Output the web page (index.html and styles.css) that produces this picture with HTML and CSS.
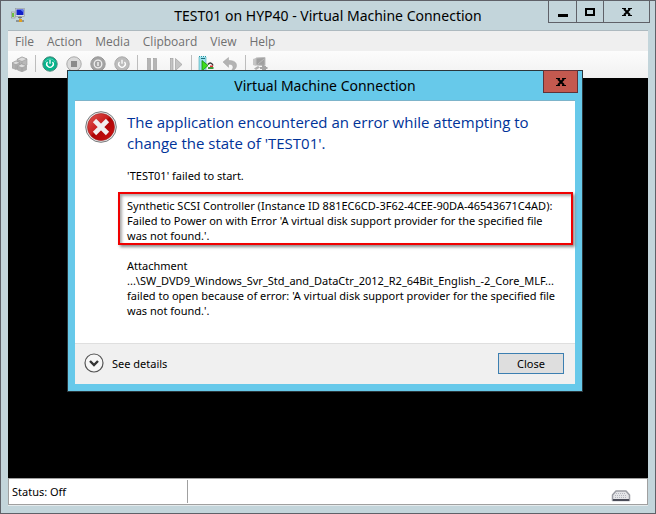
FILE: index.html
```html
<!DOCTYPE html>
<html lang="en">
<head>
    <meta charset="UTF-8">
    <meta name="viewport" content="width=device-width, initial-scale=1.0">
    <title>TEST01 on HYP40 - Virtual Machine Connection</title>
    <link rel="stylesheet" href="styles.css">
</head>
<body>
    <div class="window">
        <header class="titlebar">
            <svg class="app-icon" width="16" height="16" viewBox="0 0 16 16">
                <rect x="0.5" y="4" width="3.5" height="6" fill="#d8dcd8" stroke="#8a9090" stroke-width=".6"/>
                <rect x="1" y="5" width="2" height="4" fill="#6fc043"/>
                <rect x="4.5" y="0.5" width="9" height="8" fill="#d9dde0" stroke="#8f979c" stroke-width=".6"/>
                <rect x="5.5" y="1.5" width="7" height="5.5" fill="#1220c8"/>
                <path d="M9 1.5h3.5v3z" fill="#5c78f0"/>
                <path d="M7 9.5h4M9 8.5v3" stroke="#777" fill="none"/>
                <path d="M5 13h8" stroke="#555"/>
                <rect x="8" y="11" width="3" height="3" fill="#e0a020"/>
            </svg>
            <h1>TEST01 on HYP40 - Virtual Machine Connection</h1>
            <div class="window-buttons">
                <button type="button" class="minimize" aria-label="Minimize"><svg width="10" height="10"><path d="M0 6.5h10" stroke="#000" stroke-width="3"/></svg></button>
                <button type="button" class="maximize" aria-label="Maximize"><svg width="10" height="8"><rect x="1" y="1" width="8" height="6" fill="none" stroke="#000" stroke-width="2"/></svg></button>
                <button type="button" class="close" aria-label="Close window"><svg width="10" height="8"><path d="M2 1l6 6M8 1l-6 6" stroke="#000" stroke-width="2"/><path d="M0 .5h4M6 .5h4M0 7.500h4M6 7.500h4" stroke="#000"/></svg></button>
            </div>
        </header>

        <div class="client">
            <nav class="menu">
                <button type="button">File</button>
                <button type="button">Action</button>
                <button type="button">Media</button>
                <button type="button">Clipboard</button>
                <button type="button">View</button>
                <button type="button">Help</button>
            </nav>

            <div class="toolbar">
                <button type="button" aria-label="Ctrl+Alt+Del">
                    <svg width="16" height="16" viewBox="0 0 16 16" stroke="#9a9a9a" stroke-width=".6">
                        <path d="M5 3.500L10 1l5 2v6l-5 2.500L5 9z" fill="#b9b9b9"/>
                        <path d="M5 3.500l5 2 5-2.500-5-2z" fill="#dcdcdc"/>
                        <path d="M0 7l4-2 4 1.500v5L4 13.500 0 12z" fill="#b0b0b0"/>
                        <path d="M0 7l4 1.700L8 6.500 4 5z" fill="#dcdcdc"/>
                        <path d="M5.500 10l4-2 5 1.800v4L10 15.800 5.500 14z" fill="#adadad"/>
                        <path d="M5.500 10l4.500 1.800 4.500-2L9.500 8z" fill="#dedede"/>
                        <path d="M10 11.800v4M4 8.700v4.800M10 5.500V8" fill="none"/>
                    </svg>
                </button>
                <span class="separator"></span>
                <button type="button" aria-label="Start">
                    <svg width="16" height="16" viewBox="0 0 16 16">
                        <circle cx="8" cy="8" r="7.200" fill="#06b48c" stroke="#47877a"/>
                        <path d="M3 6a5.500 5.500 0 0 1 10 0" fill="none" stroke="#4bd4b4"/>
                        <path d="M5.500 5.800a3.300 3.300 0 1 0 5 0M8 3.800v4" fill="none" stroke="#fff" stroke-width="1.300"/>
                    </svg>
                </button>
                <button type="button" aria-label="Turn off">
                    <svg width="16" height="16" viewBox="0 0 16 16">
                        <circle cx="8" cy="8" r="7.200" fill="#dadada" stroke="#aaa"/>
                        <rect x="5" y="5" width="6" height="6" fill="#8b8b8b"/>
                    </svg>
                </button>
                <button type="button" aria-label="Shut down">
                    <svg width="16" height="16" viewBox="0 0 16 16">
                        <circle cx="8" cy="8" r="7.200" fill="#a3a3a3" stroke="#999"/>
                        <circle cx="8" cy="8" r="3.800" fill="none" stroke="#eee" stroke-width="1.300"/>
                        <path d="M8 6v4" stroke="#eee" stroke-width="1.500"/>
                    </svg>
                </button>
                <button type="button" aria-label="Save">
                    <svg width="16" height="16" viewBox="0 0 16 16">
                        <circle cx="8" cy="8" r="7.200" fill="#bcbcbc" stroke="#aaa"/>
                        <path d="M5.500 5.800a3.300 3.300 0 1 0 5 0M8 3.800v4" fill="none" stroke="#fff" stroke-width="1.300"/>
                    </svg>
                </button>
                <span class="separator"></span>
                <button type="button" aria-label="Pause">
                    <svg width="16" height="16" viewBox="0 0 16 16" fill="#b5b5b5" stroke="#999" stroke-width=".6">
                        <rect x="3.500" y="2.500" width="3" height="12"/>
                        <rect x="9.500" y="2.500" width="3" height="12"/>
                    </svg>
                </button>
                <button type="button" aria-label="Reset">
                    <svg width="16" height="16" viewBox="0 0 16 16" fill="#c4c4c4" stroke="#999" stroke-width=".6">
                        <rect x="2.500" y="2.500" width="2.500" height="12"/>
                        <path d="M7.500 2.500l6.500 6-6.500 6z"/>
                    </svg>
                </button>
                <span class="separator"></span>
                <button type="button" aria-label="Checkpoint">
                    <svg width="16" height="16" viewBox="0 0 16 16">
                        <rect x="1" y=".5" width="7" height="15" fill="#9fe3ee" stroke="#2796a5" stroke-dasharray="1 1"/>
                        <path d="M3 2.500h4" stroke="#1c6d78"/>
                        <path d="M4 4.500l6 5-6 5.500z" fill="#3ddd1c" stroke="#178a10" stroke-width=".8"/>
                        <path d="M10 8.500c2-2.500 4-1.500 5 1" fill="none" stroke="#333" stroke-width="1.500"/>
                        <path d="M10 12h5.500" stroke="#3c9a3c" stroke-width="2"/>
                        <path d="M12 9.500h3v1.500h-3z" fill="#d33"/>
                    </svg>
                </button>
                <button type="button" aria-label="Revert">
                    <svg width="16" height="16" viewBox="0 0 16 16">
                        <path d="M1 6l5.500-4.500v3c5 0 8 1.500 8 5 0 3-2.500 5-5.500 5.500 1.500-1.500 2.200-2.800 2-4.200-.3-2-2-2.500-4.500-2.500v3z" fill="#b3b3b3" stroke="#a0a0a0" stroke-width=".5"/>
                    </svg>
                </button>
                <span class="separator"></span>
                <button type="button" aria-label="Enhanced session">
                    <svg width="16" height="16" viewBox="0 0 16 16">
                        <path d="M1 3l3-1v8l-3-1z" fill="#c5c5c5"/>
                        <path d="M4 2l9-.5v8L4 9z" fill="#a0a0a0" stroke="#bdbdbd"/>
                        <path d="M6 8l6-5" stroke="#bbb"/>
                        <path d="M2 12.500l4-2.500 2 1.500-4 2.500z" fill="#b0b0b0"/>
                        <path d="M11 8.500v6M8 12h7.500M13 10v4" stroke="#a5a5a5" stroke-width="2"/>
                    </svg>
                </button>
            </div>

            <main class="screen"></main>

            <footer class="statusbar">
                <span class="status">Status: Off</span>
                <span class="status-icons">
                    <svg width="20" height="12" viewBox="0 0 20 12">
                        <path d="M5 1h10l3.500 4v5.500h-17V5z" fill="#e4e5e8" stroke="#9a9ca3" stroke-width="1.500" stroke-linejoin="round"/>
                        <path d="M5 3.500h10M4 5.500h12M4 7.500h12" stroke="#b4b6be" stroke-dasharray="1 1"/>
                        <path d="M2 10h16" stroke="#4a4c58" stroke-width="2"/>
                    </svg>
                </span>
            </footer>
        </div>
    </div>

    <div class="dialog" role="dialog" aria-labelledby="dialog-title">
        <div class="dialog-titlebar">
            <h2 id="dialog-title">Virtual Machine Connection</h2>
            <button type="button" class="dialog-close" aria-label="Close dialog"><svg width="10" height="8"><path d="M2 1l6 6M8 1l-6 6" stroke="#000" stroke-width="2"/><path d="M0 .5h4M6 .5h4M0 7.500h4M6 7.500h4" stroke="#000"/></svg></button>
        </div>
        <div class="dialog-body">
            <div class="dialog-content">
                <svg class="error-icon" width="32" height="32" viewBox="0 0 32 32">
                    <defs>
                        <linearGradient id="red" x1="0" y1="0" x2="1" y2="1">
                            <stop offset="0" stop-color="#e25a55"/>
                            <stop offset=".45" stop-color="#c81e1e"/>
                            <stop offset=".5" stop-color="#ac0505"/>
                            <stop offset="1" stop-color="#d01010"/>
                        </linearGradient>
                    </defs>
                    <circle cx="16" cy="16" r="15.300" fill="#e8e8e8" stroke="#77797b"/>
                    <circle cx="16" cy="16" r="13.500" fill="url(#red)" stroke="#9c2020" stroke-width=".6"/>
                    <path d="M9.500 9.500l13 13M22.500 9.500l-13 13" stroke="#f1eeee" stroke-width="4.600"/>
                </svg>
                <div class="message">
                    <h3>The application encountered an error while attempting to change the state of 'TEST01'.</h3>
                    <p>'TEST01' failed to start.</p>
                    <p class="highlight">Synthetic SCSI Controller (Instance ID 881EC6CD-3F62-4CEE-90DA-46543671C4AD):<br>
                        Failed to Power on with Error 'A virtual disk support provider for the specified file<br>
                        was not found.'.</p>
                    <p>Attachment<br>
                        ...\SW_DVD9_Windows_Svr_Std_and_DataCtr_2012_R2_64Bit_English_-2_Core_MLF...<br>
                        failed to open because of error: 'A virtual disk support provider for the specified file<br>
                        was not found.'.</p>
                </div>
            </div>
            <div class="dialog-footer">
                <button type="button" class="details">
                    <svg width="20" height="20" viewBox="0 0 20 20" fill="none">
                        <circle cx="10" cy="10" r="9" fill="#f6f6f6" stroke="#555" stroke-width="1.200"/>
                        <path d="M6 8l4 4 4-4" stroke="#333" stroke-width="2.400"/>
                    </svg>
                    See details
                </button>
                <button type="button" class="close-button">Close</button>
            </div>
        </div>
    </div>
</body>
</html>
```

FILE: styles.css
```css
* {
    box-sizing: border-box;
}
body {
    margin: 0;
    font-family: "Noto Sans", "Open Sans", sans-serif;
    font-size: 11px;
    line-height: 15px;
    color: #000;
    position: relative;
}
h1, h2, h3, p {
    margin: 0;
    font-weight: normal;
}
button {
    display: flex;
    align-items: center;
    justify-content: center;
    padding: 0;
    border: none;
    background: none;
    font: inherit;
    color: inherit;
}

/* main window */
.window {
    display: flex;
    flex-direction: column;
    min-height: 100vh;
    padding: 0 7px 7px;
    border: 1px solid #5f6168;
    background: #c3d5db;
}
.titlebar {
    position: relative;
    height: 29px;
}
.titlebar h1 {
    font-size: 14px;
    line-height: 29px;
    text-align: center;
}
.app-icon {
    position: absolute;
    left: 3px;
    top: 7px;
}
.window-buttons {
    position: absolute;
    right: -2px;
    top: -1px;
    display: flex;
    height: 23px;
    border: 1px solid #5f6168;
}
.window-buttons button + button {
    border-left: 1px solid #5f6168;
}
.minimize {
    width: 27px;
    padding-top: 4px;
}
.maximize {
    width: 27px;
}
.close {
    width: 46px;
}
.client {
    display: flex;
    flex-direction: column;
    flex: 1;
    border-top: 1px solid #adb9bf;
    border-bottom: 1px solid #e4eaec;
}
.menu {
    display: flex;
    gap: 13px;
    height: 20px;
    padding-left: 7px;
    background: #efefef;
    color: #707070;
}
.menu button {
    font-family: "Open Sans", "Noto Sans", sans-serif;
    font-size: 12px;
}
.toolbar {
    display: flex;
    align-items: center;
    gap: 8px;
    height: 27px;
    padding: 0 0 2px 4px;
    background: linear-gradient(#fcfcfc, #f1f1f1);
}
.toolbar button {
    width: 16px;
}
.separator {
    width: 1px;
    height: 17px;
    margin: 0 -2px 0 -1px;
    background: #bdbdbd;
}
.screen {
    flex: 1;
    background: #000;
}
.statusbar {
    display: flex;
    height: 27px;
    padding: 1px 0;
    border: 1px solid #a0a0a0;
    background: #fff;
}
.status {
    width: 179px;
    padding: 4px 3px;
    border-right: 1px solid #a0a0a0;
}
.status-icons {
    display: flex;
    align-items: flex-end;
    margin-left: auto;
    padding: 0 16px 1px 0;
}

/* error dialog */
.dialog {
    position: absolute;
    left: 67px;
    right: 73px;
    top: 70px;
    padding: 0 7px 7px;
    border: 1px solid #2b363b;
    background: #67c9ea;
}
.dialog-titlebar {
    position: relative;
    height: 29px;
}
.dialog-titlebar h2 {
    font-size: 14px;
    line-height: 29px;
    text-align: center;
}
.dialog-close {
    position: absolute;
    right: -3px;
    top: -1px;
    width: 35px;
    height: 23px;
    border: 1px solid #5f3238;
    background: #c4594f;
}
.dialog-body {
    border-top: 1px solid #7db4ca;
    background: #fff;
}
.dialog-content {
    display: flex;
    gap: 10px;
    padding: 10px 0 25px 10px;
}
.error-icon {
    flex: none;
}
.message {
    flex: 1;
    white-space: nowrap;
}
.message h3 {
    padding: 1px 40px 14px 0;
    font-family: "Open Sans", "Noto Sans", sans-serif;
    font-size: 15px;
    line-height: 21px;
    white-space: normal;
    color: #003399;
}
.highlight {
    margin: 9px 2px 13px -9px;
    padding: 4px 0 0 7px;
    border: 2px solid #f00000;
    box-shadow: 2px 2px 3px #888, inset 2px 2px 3px #aaa;
}
.dialog-footer {
    display: flex;
    align-items: center;
    justify-content: space-between;
    height: 41px;
    padding: 0 11px 2px 9px;
    border-top: 1px solid #dfdfdf;
    background: #f0f0f0;
}
.details {
    gap: 8px;
}
.close-button {
    width: 66px;
    height: 21px;
    border: 1px solid #3c7fb1;
    background: #dedede;
}
```
